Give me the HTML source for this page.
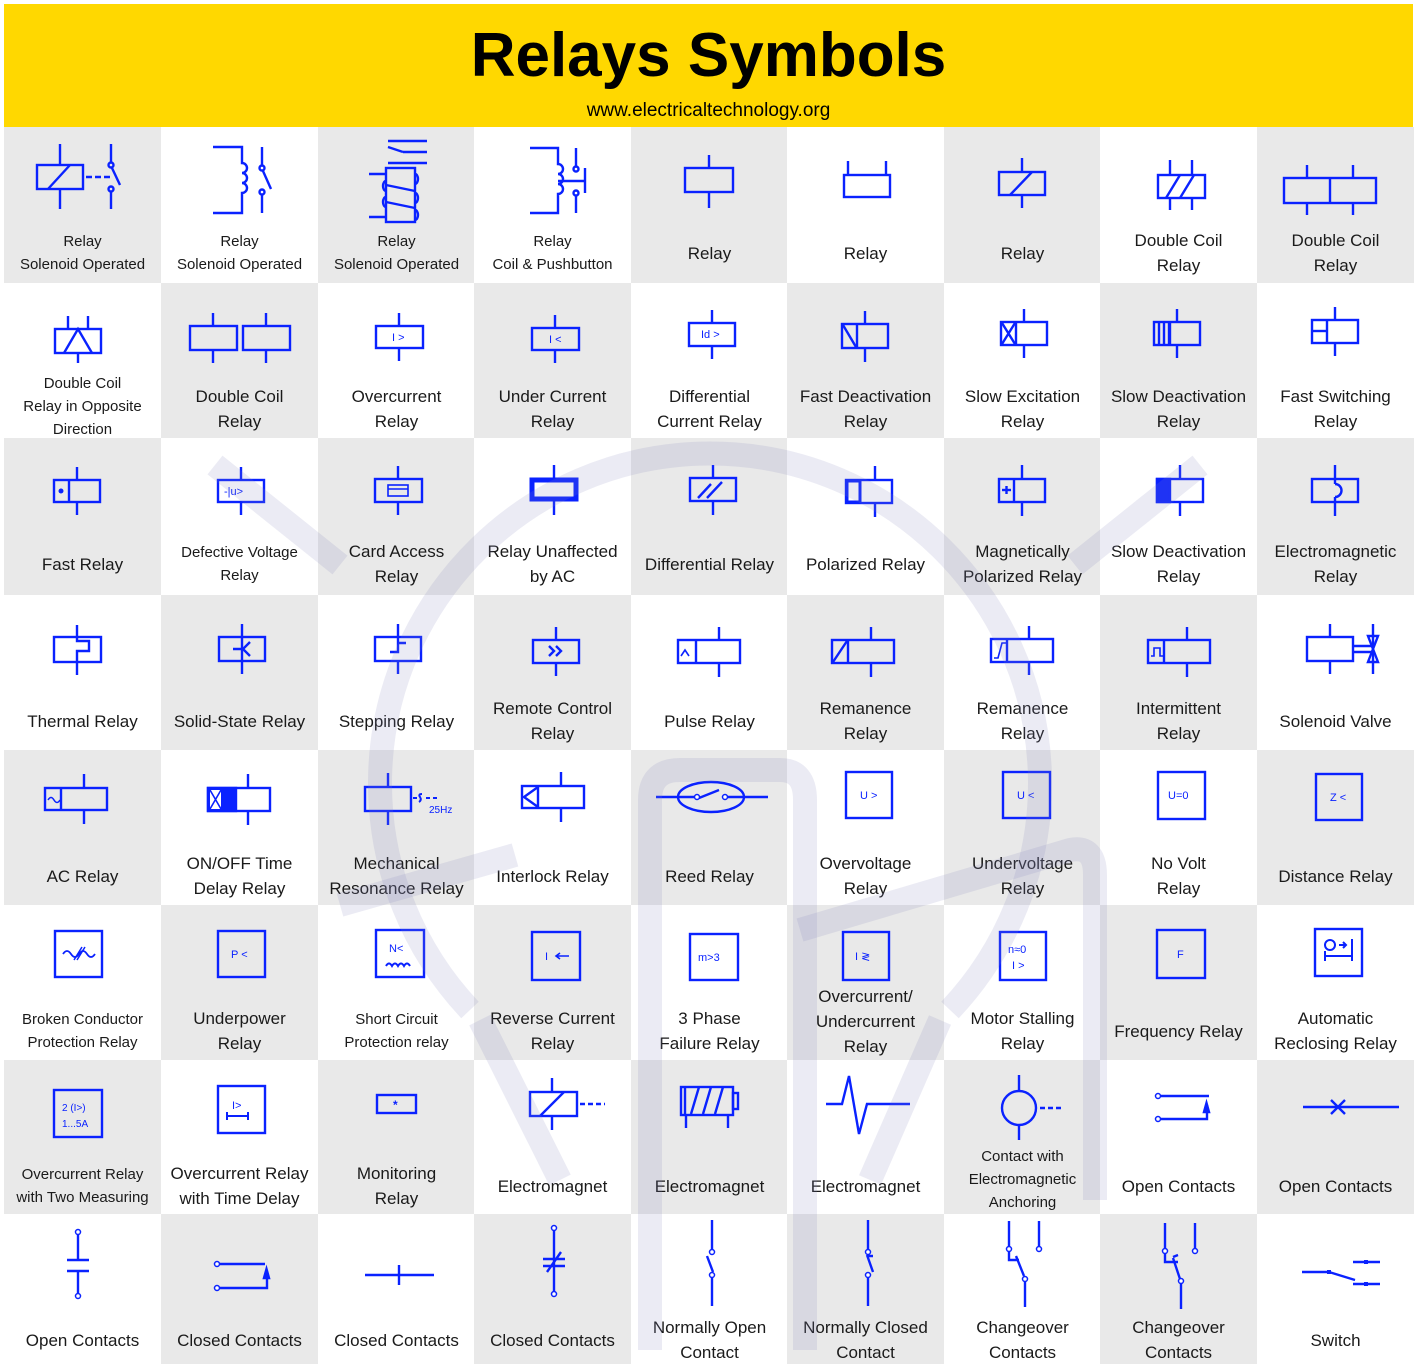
<!DOCTYPE html>
<html><head><meta charset="utf-8">
<style>
*{margin:0;padding:0;box-sizing:border-box}
body{width:1417px;height:1368px;background:#fff;position:relative;overflow:hidden;font-family:"Liberation Sans",sans-serif;color:#1a1a1a}
.hdr{position:absolute;left:4px;top:4px;width:1409px;height:123px;background:#FFD800;text-align:center}
.hdr h1{font-size:62px;font-weight:bold;color:#000;line-height:1;margin-top:21px}
.hdr p{font-size:19px;color:#000;margin-top:13px}
.c{position:absolute;width:157px;overflow:hidden}
.g{background:#e9e9e9}
.w{background:#fff}
.c svg{position:absolute;left:0;top:0;width:157px;height:155px}
.c svg g{stroke:#0a22ff;stroke-width:2.4;fill:none}
.c svg text{fill:#0a22ff;stroke:none;font-family:"Liberation Sans",sans-serif;font-size:11px}
.l{position:absolute;left:-4px;right:-4px;top:98px;height:56px;display:flex;flex-direction:column;justify-content:center;align-items:center;text-align:center;font-size:17px;line-height:25px;white-space:nowrap}
.s{font-size:15px;line-height:23px}
.t3{top:84px;height:78px}
.wm{position:absolute;left:0;top:0;width:1417px;height:1368px;pointer-events:none}
</style></head><body>
<div class="hdr"><h1>Relays Symbols</h1><p>www.electricaltechnology.org</p></div>

<div class="c g" style="left:4px;top:127px;height:156px"><svg viewBox="0 0 157 155"><g>
<rect x="33" y="38" width="46" height="24"/><line x1="44" y1="62" x2="66" y2="38"/><line x1="56" y1="17" x2="56" y2="38"/><line x1="56" y1="62" x2="56" y2="82"/>
<line x1="82" y1="50" x2="106" y2="50" stroke-dasharray="6,3"/><line x1="107" y1="17" x2="107" y2="36"/><circle cx="107" cy="38" r="2.5"/><line x1="108" y1="41" x2="116" y2="58"/><circle cx="107" cy="62" r="2.5"/><line x1="107" y1="65" x2="107" y2="82"/></g></svg>
<div class="l s"><span>Relay</span><span>Solenoid Operated</span></div></div>

<div class="c w" style="left:161px;top:127px;height:156px"><svg viewBox="0 0 157 155"><g>
<path d="M52 20H81V36a5 5 0 0 1 0 10a5 5 0 0 1 0 10a5 5 0 0 1 0 10V86H52"/><line x1="101" y1="20" x2="101" y2="39"/><circle cx="101" cy="41" r="2.5"/><line x1="102" y1="44" x2="110" y2="62"/><circle cx="101" cy="65" r="2.5"/><line x1="101" y1="68" x2="101" y2="86"/></g></svg>
<div class="l s"><span>Relay</span><span>Solenoid Operated</span></div></div>

<div class="c g" style="left:318px;top:127px;height:156px"><svg viewBox="0 0 157 155"><g>
<rect x="68" y="41" width="29" height="54"/><line x1="51" y1="47" x2="68" y2="47"/><line x1="51" y1="90" x2="68" y2="90"/>
<path d="M68 58L97 64M68 75L97 81"/><line x1="70" y1="20" x2="85" y2="25"/><line x1="85" y1="25" x2="109" y2="25"/><line x1="70" y1="14" x2="109" y2="14"/><line x1="70" y1="36" x2="109" y2="36"/>
<path d="M68 54a3 5 0 0 0 0 10M68 70a3 5 0 0 0 0 10M97 47a3 5 0 0 1 0 10M97 66a3 5 0 0 1 0 10M97 83a3 5 0 0 1 0 10"/></g></svg>
<div class="l s"><span>Relay</span><span>Solenoid Operated</span></div></div>

<div class="c w" style="left:474px;top:127px;height:156px"><svg viewBox="0 0 157 155"><g>
<path d="M56 21H84V37a4 4 0 0 1 0 10a4 4 0 0 1 0 10a4 4 0 0 1 0 10V86H56"/><line x1="84" y1="54" x2="111" y2="54"/><line x1="111" y1="41" x2="111" y2="66"/>
<line x1="102" y1="21" x2="102" y2="39"/><circle cx="102" cy="42" r="2.5"/><circle cx="102" cy="66" r="2.5"/><line x1="102" y1="69" x2="102" y2="86"/></g></svg>
<div class="l s"><span>Relay</span><span>Coil &amp; Pushbutton</span></div></div>

<div class="c g" style="left:631px;top:127px;height:156px"><svg viewBox="0 0 157 155"><g>
<rect x="54" y="41" width="48" height="24"/><line x1="78" y1="28" x2="78" y2="41"/><line x1="78" y1="65" x2="78" y2="81"/></g></svg>
<div class="l"><span>Relay</span></div></div>

<div class="c w" style="left:787px;top:127px;height:156px"><svg viewBox="0 0 157 155"><g>
<rect x="57" y="48" width="46" height="22"/><line x1="61" y1="34" x2="61" y2="48"/><line x1="99" y1="34" x2="99" y2="48"/></g></svg>
<div class="l"><span>Relay</span></div></div>

<div class="c g" style="left:944px;top:127px;height:156px"><svg viewBox="0 0 157 155"><g>
<rect x="55" y="45" width="46" height="23"/><line x1="66" y1="68" x2="88" y2="45"/><line x1="78" y1="31" x2="78" y2="45"/><line x1="78" y1="68" x2="78" y2="81"/></g></svg>
<div class="l"><span>Relay</span></div></div>

<div class="c w" style="left:1100px;top:127px;height:156px"><svg viewBox="0 0 157 155"><g>
<rect x="58" y="48" width="47" height="23"/><line x1="66" y1="71" x2="80" y2="48"/><line x1="80" y1="71" x2="94" y2="48"/><line x1="70" y1="33" x2="70" y2="48"/><line x1="92" y1="33" x2="92" y2="48"/><line x1="70" y1="71" x2="70" y2="83"/><line x1="92" y1="71" x2="92" y2="83"/></g></svg>
<div class="l"><span>Double Coil</span><span>Relay</span></div></div>

<div class="c g" style="left:1257px;top:127px;height:156px"><svg viewBox="0 0 157 155"><g>
<rect x="27" y="51" width="92" height="25"/><line x1="73" y1="51" x2="73" y2="76"/><line x1="50" y1="38" x2="50" y2="51"/><line x1="96" y1="38" x2="96" y2="51"/><line x1="50" y1="76" x2="50" y2="88"/><line x1="96" y1="76" x2="96" y2="88"/></g></svg>
<div class="l"><span>Double Coil</span><span>Relay</span></div></div>

<div class="c w" style="left:4px;top:283px;height:155px"><svg viewBox="0 0 157 155"><g>
<rect x="51" y="46" width="46" height="24"/><path d="M60 70L74 46L88 70"/><line x1="64" y1="33" x2="64" y2="46"/><line x1="84" y1="33" x2="84" y2="46"/><line x1="74" y1="70" x2="74" y2="80"/></g></svg>
<div class="l s t3"><span>Double Coil</span><span>Relay in Opposite</span><span>Direction</span></div></div>

<div class="c g" style="left:161px;top:283px;height:155px"><svg viewBox="0 0 157 155"><g>
<rect x="29" y="43" width="47" height="24"/><rect x="82" y="43" width="47" height="24"/><line x1="52" y1="30" x2="52" y2="43"/><line x1="105" y1="30" x2="105" y2="43"/><line x1="52" y1="67" x2="52" y2="80"/><line x1="105" y1="67" x2="105" y2="80"/></g></svg>
<div class="l"><span>Double Coil</span><span>Relay</span></div></div>

<div class="c w" style="left:318px;top:283px;height:155px"><svg viewBox="0 0 157 155"><g>
<rect x="58" y="43" width="47" height="22"/><line x1="81" y1="30" x2="81" y2="43"/><line x1="81" y1="65" x2="81" y2="78"/></g><text x="74" y="58">I &gt;</text></svg>
<div class="l"><span>Overcurrent</span><span>Relay</span></div></div>

<div class="c g" style="left:474px;top:283px;height:155px"><svg viewBox="0 0 157 155"><g>
<rect x="58" y="45" width="47" height="22"/><line x1="81" y1="32" x2="81" y2="45"/><line x1="81" y1="67" x2="81" y2="80"/></g><text x="75" y="60">I &lt;</text></svg>
<div class="l"><span>Under Current</span><span>Relay</span></div></div>

<div class="c w" style="left:631px;top:283px;height:155px"><svg viewBox="0 0 157 155"><g>
<rect x="58" y="40" width="46" height="23"/><line x1="81" y1="27" x2="81" y2="40"/><line x1="81" y1="63" x2="81" y2="76"/></g><text x="70" y="55">Id &gt;</text></svg>
<div class="l"><span>Differential</span><span>Current Relay</span></div></div>

<div class="c g" style="left:787px;top:283px;height:155px"><svg viewBox="0 0 157 155"><g>
<rect x="55" y="41" width="46" height="24"/><line x1="70" y1="41" x2="70" y2="65"/><line x1="56" y1="42" x2="69" y2="64"/><line x1="78" y1="28" x2="78" y2="41"/><line x1="78" y1="65" x2="78" y2="79"/></g></svg>
<div class="l"><span>Fast Deactivation</span><span>Relay</span></div></div>

<div class="c w" style="left:944px;top:283px;height:155px"><svg viewBox="0 0 157 155"><g>
<rect x="57" y="39" width="46" height="23"/><line x1="72" y1="39" x2="72" y2="62"/><path d="M58 40L71 61M71 40L58 61"/><line x1="80" y1="26" x2="80" y2="39"/><line x1="80" y1="62" x2="80" y2="75"/></g></svg>
<div class="l"><span>Slow Excitation</span><span>Relay</span></div></div>

<div class="c g" style="left:1100px;top:283px;height:155px"><svg viewBox="0 0 157 155"><g>
<rect x="54" y="39" width="46" height="23"/><line x1="59" y1="39" x2="59" y2="62"/><line x1="64" y1="39" x2="64" y2="62"/><line x1="69" y1="39" x2="69" y2="62"/><line x1="70" y1="39" x2="70" y2="62"/><line x1="77" y1="26" x2="77" y2="39"/><line x1="77" y1="62" x2="77" y2="75"/></g></svg>
<div class="l"><span>Slow Deactivation</span><span>Relay</span></div></div>

<div class="c w" style="left:1257px;top:283px;height:155px"><svg viewBox="0 0 157 155"><g>
<rect x="55" y="37" width="46" height="23"/><line x1="70" y1="37" x2="70" y2="60"/><line x1="55" y1="48" x2="70" y2="48"/><line x1="78" y1="24" x2="78" y2="37"/><line x1="78" y1="60" x2="78" y2="73"/></g></svg>
<div class="l"><span>Fast Switching</span><span>Relay</span></div></div>

<div class="c g" style="left:4px;top:438px;height:157px"><svg viewBox="0 0 157 155"><g>
<rect x="50" y="42" width="46" height="22"/><line x1="65" y1="42" x2="65" y2="64"/><line x1="73" y1="29" x2="73" y2="42"/><line x1="73" y1="64" x2="73" y2="77"/></g><circle cx="57" cy="53" r="2.5" fill="#0a22ff"/></svg>
<div class="l"><span>Fast Relay</span></div></div>

<div class="c w" style="left:161px;top:438px;height:157px"><svg viewBox="0 0 157 155"><g>
<rect x="57" y="42" width="46" height="22"/><line x1="80" y1="29" x2="80" y2="42"/><line x1="80" y1="64" x2="80" y2="77"/></g><text x="63" y="57">-|u&gt;</text></svg>
<div class="l s"><span>Defective Voltage</span><span>Relay</span></div></div>

<div class="c g" style="left:318px;top:438px;height:157px"><svg viewBox="0 0 157 155"><g>
<rect x="57" y="41" width="47" height="23"/><rect x="70" y="47" width="20" height="11" stroke-width="1.6"/><line x1="70" y1="51" x2="90" y2="51" stroke-width="1.6"/><line x1="80" y1="28" x2="80" y2="41"/><line x1="80" y1="64" x2="80" y2="77"/></g></svg>
<div class="l"><span>Card Access</span><span>Relay</span></div></div>

<div class="c w" style="left:474px;top:438px;height:157px"><svg viewBox="0 0 157 155"><g>
<rect x="58" y="42" width="44" height="19" stroke-width="5"/><line x1="80" y1="27" x2="80" y2="40"/><line x1="80" y1="63" x2="80" y2="77"/></g></svg>
<div class="l"><span>Relay Unaffected</span><span>by AC</span></div></div>

<div class="c g" style="left:631px;top:438px;height:157px"><svg viewBox="0 0 157 155"><g>
<rect x="59" y="40" width="46" height="23"/><line x1="67" y1="60" x2="80" y2="46"/><line x1="76" y1="60" x2="91" y2="44"/><line x1="82" y1="27" x2="82" y2="40"/><line x1="82" y1="63" x2="82" y2="77"/></g></svg>
<div class="l"><span>Differential Relay</span></div></div>

<div class="c w" style="left:787px;top:438px;height:157px"><svg viewBox="0 0 157 155"><g>
<rect x="59" y="42" width="46" height="23"/><rect x="60" y="43" width="13" height="21" stroke-width="3"/><line x1="88" y1="28" x2="88" y2="42"/><line x1="88" y1="65" x2="88" y2="79"/></g></svg>
<div class="l"><span>Polarized Relay</span></div></div>

<div class="c g" style="left:944px;top:438px;height:157px"><svg viewBox="0 0 157 155"><g>
<rect x="55" y="41" width="46" height="23"/><line x1="70" y1="41" x2="70" y2="64"/><line x1="58" y1="52" x2="67" y2="52"/><line x1="62.5" y1="48" x2="62.5" y2="56"/><line x1="78" y1="27" x2="78" y2="41"/><line x1="78" y1="64" x2="78" y2="78"/></g></svg>
<div class="l"><span>Magnetically</span><span>Polarized Relay</span></div></div>

<div class="c w" style="left:1100px;top:438px;height:157px"><svg viewBox="0 0 157 155"><g>
<rect x="57" y="41" width="46" height="23"/><rect x="57" y="41" width="13" height="23" fill="#0a22ff"/><line x1="80" y1="27" x2="80" y2="41"/><line x1="80" y1="64" x2="80" y2="78"/></g></svg>
<div class="l"><span>Slow Deactivation</span><span>Relay</span></div></div>

<div class="c g" style="left:1257px;top:438px;height:157px"><svg viewBox="0 0 157 155"><g>
<rect x="55" y="41" width="46" height="23"/><path d="M78 46a6 6 0 0 1 0 13"/><line x1="78" y1="27" x2="78" y2="46"/><line x1="78" y1="59" x2="78" y2="78"/></g></svg>
<div class="l"><span>Electromagnetic</span><span>Relay</span></div></div>

<div class="c w" style="left:4px;top:595px;height:155px"><svg viewBox="0 0 157 155"><g>
<rect x="50" y="42" width="47" height="25"/><path d="M73 30V46H85V56H73V67V80"/></g></svg>
<div class="l"><span>Thermal Relay</span></div></div>

<div class="c g" style="left:161px;top:595px;height:155px"><svg viewBox="0 0 157 155"><g>
<rect x="58" y="42" width="46" height="24"/><line x1="81" y1="29" x2="81" y2="79"/><path d="M72 54H81M89 47L82 54L89 61"/></g></svg>
<div class="l"><span>Solid-State Relay</span></div></div>

<div class="c w" style="left:318px;top:595px;height:155px"><svg viewBox="0 0 157 155"><g>
<rect x="57" y="42" width="46" height="24"/><path d="M80 29V48M72 57H80V48H88"/><line x1="80" y1="66" x2="80" y2="79"/></g></svg>
<div class="l"><span>Stepping Relay</span></div></div>

<div class="c g" style="left:474px;top:595px;height:155px"><svg viewBox="0 0 157 155"><g>
<rect x="59" y="45" width="46" height="23"/><path d="M75 51L80 56L75 61M82 51L87 56L82 61"/><line x1="82" y1="32" x2="82" y2="45"/><line x1="82" y1="68" x2="82" y2="81"/></g></svg>
<div class="l"><span>Remote Control</span><span>Relay</span></div></div>

<div class="c w" style="left:631px;top:595px;height:155px"><svg viewBox="0 0 157 155"><g>
<rect x="47" y="45" width="62" height="23"/><line x1="65" y1="45" x2="65" y2="68"/><path d="M50 61L54 55L58 61" stroke-width="1.6"/><line x1="88" y1="32" x2="88" y2="45"/><line x1="88" y1="68" x2="88" y2="82"/></g></svg>
<div class="l"><span>Pulse Relay</span></div></div>

<div class="c g" style="left:787px;top:595px;height:155px"><svg viewBox="0 0 157 155"><g>
<rect x="45" y="45" width="62" height="23"/><line x1="61" y1="45" x2="61" y2="68"/><line x1="46" y1="67" x2="60" y2="46"/><line x1="84" y1="32" x2="84" y2="45"/><line x1="84" y1="68" x2="84" y2="82"/></g></svg>
<div class="l"><span>Remanence</span><span>Relay</span></div></div>

<div class="c w" style="left:944px;top:595px;height:155px"><svg viewBox="0 0 157 155"><g>
<rect x="47" y="44" width="62" height="23"/><line x1="63" y1="44" x2="63" y2="67"/><path d="M50 63H54L58 48H62" stroke-width="1.6"/><line x1="85" y1="31" x2="85" y2="44"/><line x1="85" y1="67" x2="85" y2="80"/></g></svg>
<div class="l"><span>Remanence</span><span>Relay</span></div></div>

<div class="c g" style="left:1100px;top:595px;height:155px"><svg viewBox="0 0 157 155"><g>
<rect x="48" y="45" width="62" height="23"/><line x1="64" y1="45" x2="64" y2="68"/><path d="M51 61H54V53H60V61H63" stroke-width="1.6"/><line x1="87" y1="32" x2="87" y2="45"/><line x1="87" y1="68" x2="87" y2="82"/></g></svg>
<div class="l"><span>Intermittent</span><span>Relay</span></div></div>

<div class="c w" style="left:1257px;top:595px;height:155px"><svg viewBox="0 0 157 155"><g>
<rect x="50" y="42" width="46" height="24"/><line x1="73" y1="29" x2="73" y2="42"/><line x1="73" y1="66" x2="73" y2="79"/><line x1="96" y1="51" x2="116" y2="51"/><line x1="96" y1="57" x2="116" y2="57"/><line x1="116" y1="29" x2="116" y2="79"/><path d="M111 41H121L116 54L111 67H121L116 54Z"/></g></svg>
<div class="l"><span>Solenoid Valve</span></div></div>

<div class="c g" style="left:4px;top:750px;height:155px"><svg viewBox="0 0 157 155"><g>
<rect x="41" y="38" width="62" height="22"/><line x1="57" y1="38" x2="57" y2="60"/><path d="M44 50q3-5 6 0t6 0" stroke-width="1.5"/><line x1="80" y1="24" x2="80" y2="38"/><line x1="80" y1="60" x2="80" y2="74"/></g></svg>
<div class="l"><span>AC Relay</span></div></div>

<div class="c w" style="left:161px;top:750px;height:155px"><svg viewBox="0 0 157 155"><g>
<rect x="47" y="38" width="62" height="23"/><rect x="47" y="38" width="28" height="23" fill="#0a22ff"/><rect x="49" y="40" width="11" height="19" fill="#fff" stroke="none"/><path d="M49 40L60 59M60 40L49 59" stroke-width="1.6"/><line x1="87" y1="24" x2="87" y2="38"/><line x1="87" y1="61" x2="87" y2="75"/></g></svg>
<div class="l"><span>ON/OFF Time</span><span>Delay Relay</span></div></div>

<div class="c g" style="left:318px;top:750px;height:155px"><svg viewBox="0 0 157 155"><g>
<rect x="47" y="37" width="46" height="24"/><line x1="70" y1="23" x2="70" y2="37"/><line x1="70" y1="61" x2="70" y2="75"/><path d="M95 48H99M104 44q-4 0 -2 3t-1 5M108 48H112M115 48H119" stroke-width="2"/></g><text x="111" y="63" style="font-size:10px">25Hz</text></svg>
<div class="l"><span>Mechanical</span><span>Resonance Relay</span></div></div>

<div class="c w" style="left:474px;top:750px;height:155px"><svg viewBox="0 0 157 155"><g>
<rect x="48" y="36" width="62" height="22"/><line x1="64" y1="36" x2="64" y2="58"/><path d="M64 37L50 47L64 57"/><line x1="87" y1="22" x2="87" y2="36"/><line x1="87" y1="58" x2="87" y2="72"/></g></svg>
<div class="l"><span>Interlock Relay</span></div></div>

<div class="c g" style="left:631px;top:750px;height:155px"><svg viewBox="0 0 157 155"><g>
<ellipse cx="80" cy="47" rx="33" ry="15"/><line x1="25" y1="47" x2="64" y2="47"/><line x1="96" y1="47" x2="137" y2="47"/><line x1="68" y1="48" x2="88" y2="40"/></g><circle cx="66" cy="47" r="2.5" fill="#fff" stroke="#0a22ff" stroke-width="1.5"/><circle cx="94" cy="47" r="2.5" fill="#fff" stroke="#0a22ff" stroke-width="1.5"/></svg>
<div class="l"><span>Reed Relay</span></div></div>

<div class="c w" style="left:787px;top:750px;height:155px"><svg viewBox="0 0 157 155"><g><rect x="59" y="22" width="46" height="46"/></g><text x="73" y="49">U &gt;</text></svg>
<div class="l"><span>Overvoltage</span><span>Relay</span></div></div>

<div class="c g" style="left:944px;top:750px;height:155px"><svg viewBox="0 0 157 155"><g><rect x="59" y="22" width="47" height="46"/></g><text x="73" y="49">U &lt;</text></svg>
<div class="l"><span>Undervoltage</span><span>Relay</span></div></div>

<div class="c w" style="left:1100px;top:750px;height:155px"><svg viewBox="0 0 157 155"><g><rect x="58" y="22" width="47" height="47"/></g><text x="68" y="49">U=0</text></svg>
<div class="l"><span>No Volt</span><span>Relay</span></div></div>

<div class="c g" style="left:1257px;top:750px;height:155px"><svg viewBox="0 0 157 155"><g><rect x="59" y="24" width="46" height="46"/></g><text x="73" y="51">Z &lt;</text></svg>
<div class="l"><span>Distance Relay</span></div></div>

<div class="c w" style="left:4px;top:905px;height:155px"><svg viewBox="0 0 157 155"><g><rect x="51" y="26" width="47" height="46"/><path d="M59 49q4-6 8 0t8 0t8 0t8 0" stroke-width="1.8"/><line x1="70" y1="55" x2="78" y2="42" stroke-width="1.5"/><line x1="73" y1="55" x2="81" y2="42" stroke-width="1.5"/></g></svg>
<div class="l s"><span>Broken Conductor</span><span>Protection Relay</span></div></div>

<div class="c g" style="left:161px;top:905px;height:155px"><svg viewBox="0 0 157 155"><g><rect x="57" y="26" width="47" height="46"/></g><text x="70" y="53">P &lt;</text></svg>
<div class="l"><span>Underpower</span><span>Relay</span></div></div>

<div class="c w" style="left:318px;top:905px;height:155px"><svg viewBox="0 0 157 155"><g><rect x="58" y="25" width="48" height="47"/><path d="M68 61q3-5 6 0q3-5 6 0q3-5 6 0q3-5 6 0" stroke-width="2"/></g><text x="71" y="47">N&lt;</text></svg>
<div class="l s"><span>Short Circuit</span><span>Protection relay</span></div></div>

<div class="c g" style="left:474px;top:905px;height:155px"><svg viewBox="0 0 157 155"><g><rect x="58" y="27" width="48" height="48"/><path d="M82 51H95M86 48L82 51L86 54" stroke-width="1.6"/></g><text x="71" y="55">I</text></svg>
<div class="l"><span>Reverse Current</span><span>Relay</span></div></div>

<div class="c w" style="left:631px;top:905px;height:155px"><svg viewBox="0 0 157 155"><g><rect x="59" y="29" width="48" height="46"/></g><text x="67" y="56">m&gt;3</text></svg>
<div class="l"><span>3 Phase</span><span>Failure Relay</span></div></div>

<div class="c g" style="left:787px;top:905px;height:155px"><svg viewBox="0 0 157 155"><g><rect x="56" y="27" width="46" height="48"/></g><text x="68" y="55">I ≷</text></svg>
<div class="l" style="top:77px;height:78px"><span>Overcurrent/</span><span>Undercurrent</span><span>Relay</span></div></div>

<div class="c w" style="left:944px;top:905px;height:155px"><svg viewBox="0 0 157 155"><g><rect x="56" y="27" width="46" height="48"/></g><text x="64" y="48">n≈0</text><text x="68" y="64">I &gt;</text></svg>
<div class="l"><span>Motor Stalling</span><span>Relay</span></div></div>

<div class="c g" style="left:1100px;top:905px;height:155px"><svg viewBox="0 0 157 155"><g><rect x="57" y="25" width="48" height="48"/></g><text x="77" y="53">F</text></svg>
<div class="l"><span>Frequency Relay</span></div></div>

<div class="c w" style="left:1257px;top:905px;height:155px"><svg viewBox="0 0 157 155"><g><rect x="58" y="24" width="47" height="47"/><circle cx="73" cy="40" r="5" stroke-width="2"/><path d="M82 40H89M86 37L89 40L86 43M95 34V46M68 46V56M68 51H95M95 46V56" stroke-width="2"/></g></svg>
<div class="l"><span>Automatic</span><span>Reclosing Relay</span></div></div>

<div class="c g" style="left:4px;top:1060px;height:154px"><svg viewBox="0 0 157 155"><g><rect x="50" y="30" width="48" height="47"/></g><text x="58" y="51" style="font-size:10px">2 (I&gt;)</text><text x="58" y="67" style="font-size:10px">1...5A</text></svg>
<div class="l s"><span>Overcurrent Relay</span><span>with Two Measuring</span></div></div>

<div class="c w" style="left:161px;top:1060px;height:154px"><svg viewBox="0 0 157 155"><g><rect x="57" y="26" width="47" height="47"/><path d="M66 56H87M66 52V60M87 52V60" stroke-width="2"/></g><text x="71" y="49">I&gt;</text></svg>
<div class="l"><span>Overcurrent Relay</span><span>with Time Delay</span></div></div>

<div class="c g" style="left:318px;top:1060px;height:154px"><svg viewBox="0 0 157 155"><g><rect x="59" y="35" width="39" height="18"/></g><text x="75" y="49" style="font-size:12px;font-weight:bold">*</text></svg>
<div class="l"><span>Monitoring</span><span>Relay</span></div></div>

<div class="c w" style="left:474px;top:1060px;height:154px"><svg viewBox="0 0 157 155"><g><rect x="56" y="32" width="47" height="24"/><line x1="66" y1="56" x2="90" y2="32"/><line x1="78" y1="18" x2="78" y2="32"/><line x1="78" y1="56" x2="78" y2="70"/><line x1="106" y1="44" x2="131" y2="44" stroke-dasharray="5,3"/></g></svg>
<div class="l"><span>Electromagnet</span></div></div>

<div class="c g" style="left:631px;top:1060px;height:154px"><svg viewBox="0 0 157 155"><g><rect x="50" y="27" width="52" height="28"/><rect x="102" y="33" width="5" height="16"/><line x1="54" y1="27" x2="54" y2="55"/><path d="M60 54L68 27M72 54L80 27M84 54L92 27"/><line x1="55" y1="55" x2="55" y2="68"/><line x1="97" y1="55" x2="97" y2="68"/></g></svg>
<div class="l"><span>Electromagnet</span></div></div>

<div class="c w" style="left:787px;top:1060px;height:154px"><svg viewBox="0 0 157 155"><g><path d="M39 44H55L62 16L72 74L80 44H123"/></g></svg>
<div class="l"><span>Electromagnet</span></div></div>

<div class="c g" style="left:944px;top:1060px;height:154px"><svg viewBox="0 0 157 155"><g><circle cx="75" cy="48" r="17"/><line x1="75" y1="15" x2="75" y2="31"/><line x1="75" y1="65" x2="75" y2="80"/><line x1="96" y1="48" x2="120" y2="48" stroke-dasharray="5,3"/></g></svg>
<div class="l s" style="top:80px;height:78px"><span>Contact with</span><span>Electromagnetic</span><span>Anchoring</span></div></div>

<div class="c w" style="left:1100px;top:1060px;height:154px"><svg viewBox="0 0 157 155"><g><line x1="61" y1="36" x2="109" y2="36"/><path d="M61 59H107V45"/><path d="M104 52L106.5 43L109 52Z" fill="#0a22ff"/></g><circle cx="58" cy="36" r="2.5" fill="#fff" stroke="#0a22ff" stroke-width="1.5"/><circle cx="58" cy="59" r="2.5" fill="#fff" stroke="#0a22ff" stroke-width="1.5"/></svg>
<div class="l"><span>Open Contacts</span></div></div>

<div class="c g" style="left:1257px;top:1060px;height:154px"><svg viewBox="0 0 157 155"><g><line x1="46" y1="47" x2="142" y2="47"/><path d="M74 40L88 54M88 40L74 54"/></g></svg>
<div class="l"><span>Open Contacts</span></div></div>

<div class="c w" style="left:4px;top:1214px;height:150px"><svg viewBox="0 0 157 155"><g><line x1="74" y1="20" x2="74" y2="46"/><line x1="74" y1="57" x2="74" y2="82"/><line x1="63" y1="46" x2="85" y2="46"/><line x1="63" y1="57" x2="85" y2="57"/></g><circle cx="74" cy="18" r="2.5" fill="#fff" stroke="#0a22ff" stroke-width="1.5"/><circle cx="74" cy="82" r="2.5" fill="#fff" stroke="#0a22ff" stroke-width="1.5"/></svg>
<div class="l"><span>Open Contacts</span></div></div>

<div class="c g" style="left:161px;top:1214px;height:150px"><svg viewBox="0 0 157 155"><g><line x1="58" y1="50" x2="104" y2="50"/><path d="M58 74H106V60"/><path d="M103 64L105.5 55L108 64Z" fill="#0a22ff"/></g><circle cx="56" cy="50" r="2.5" fill="#fff" stroke="#0a22ff" stroke-width="1.5"/><circle cx="56" cy="74" r="2.5" fill="#fff" stroke="#0a22ff" stroke-width="1.5"/></svg>
<div class="l"><span>Closed Contacts</span></div></div>

<div class="c w" style="left:318px;top:1214px;height:150px"><svg viewBox="0 0 157 155"><g><line x1="47" y1="61" x2="116" y2="61"/><line x1="81" y1="51" x2="81" y2="71"/></g></svg>
<div class="l"><span>Closed Contacts</span></div></div>

<div class="c g" style="left:474px;top:1214px;height:150px"><svg viewBox="0 0 157 155"><g><line x1="80" y1="16" x2="80" y2="78"/><line x1="69" y1="45" x2="91" y2="45"/><line x1="69" y1="52" x2="91" y2="52"/><line x1="73" y1="58" x2="87" y2="38"/></g><circle cx="80" cy="14" r="2.5" fill="#fff" stroke="#0a22ff" stroke-width="1.5"/><circle cx="80" cy="80" r="2.5" fill="#fff" stroke="#0a22ff" stroke-width="1.5"/></svg>
<div class="l"><span>Closed Contacts</span></div></div>

<div class="c w" style="left:631px;top:1214px;height:150px"><svg viewBox="0 0 157 155"><g><line x1="81" y1="6" x2="81" y2="36"/><line x1="76" y1="42" x2="82" y2="58"/><line x1="81" y1="64" x2="81" y2="92"/></g><circle cx="81" cy="38" r="2.5" fill="#fff" stroke="#0a22ff" stroke-width="1.5"/><circle cx="81" cy="61" r="2.5" fill="#fff" stroke="#0a22ff" stroke-width="1.5"/></svg>
<div class="l"><span>Normally Open</span><span>Contact</span></div></div>

<div class="c g" style="left:787px;top:1214px;height:150px"><svg viewBox="0 0 157 155"><g><line x1="81" y1="6" x2="81" y2="36"/><path d="M80 41L86 58M81 42L86 42"/><line x1="81" y1="64" x2="81" y2="92"/></g><circle cx="81" cy="38" r="2.5" fill="#fff" stroke="#0a22ff" stroke-width="1.5"/><circle cx="81" cy="61" r="2.5" fill="#fff" stroke="#0a22ff" stroke-width="1.5"/></svg>
<div class="l"><span>Normally Closed</span><span>Contact</span></div></div>

<div class="c w" style="left:944px;top:1214px;height:150px"><svg viewBox="0 0 157 155"><g><line x1="65" y1="7" x2="65" y2="33"/><line x1="95" y1="7" x2="95" y2="33"/><path d="M65 37V46H75M72 42L80 62"/><line x1="81" y1="67" x2="81" y2="93"/></g><circle cx="65" cy="35" r="2.5" fill="#fff" stroke="#0a22ff" stroke-width="1.5"/><circle cx="95" cy="35" r="2.5" fill="#fff" stroke="#0a22ff" stroke-width="1.5"/><circle cx="81" cy="65" r="2.5" fill="#fff" stroke="#0a22ff" stroke-width="1.5"/></svg>
<div class="l"><span>Changeover</span><span>Contacts</span></div></div>

<div class="c g" style="left:1100px;top:1214px;height:150px"><svg viewBox="0 0 157 155"><g><line x1="65" y1="9" x2="65" y2="35"/><line x1="95" y1="9" x2="95" y2="35"/><path d="M65 39V48H78M73 44L80 65M73 43L78 41"/><line x1="81" y1="69" x2="81" y2="95"/></g><circle cx="65" cy="37" r="2.5" fill="#fff" stroke="#0a22ff" stroke-width="1.5"/><circle cx="95" cy="37" r="2.5" fill="#fff" stroke="#0a22ff" stroke-width="1.5"/><circle cx="81" cy="67" r="2.5" fill="#fff" stroke="#0a22ff" stroke-width="1.5"/></svg>
<div class="l"><span>Changeover</span><span>Contacts</span></div></div>

<div class="c w" style="left:1257px;top:1214px;height:150px"><svg viewBox="0 0 157 155"><g><line x1="45" y1="58" x2="72" y2="58"/><line x1="72" y1="58" x2="98" y2="66"/><line x1="96" y1="48" x2="123" y2="48"/><line x1="96" y1="70" x2="123" y2="70"/></g><rect x="70" y="56" width="4" height="4" fill="#0a22ff"/><rect x="107" y="46" width="4" height="4" fill="#0a22ff"/><rect x="107" y="68" width="4" height="4" fill="#0a22ff"/></svg>
<div class="l"><span>Switch</span></div></div>

<svg class="wm" viewBox="0 0 1417 1368"><g fill="none" stroke="#8a8ac0" stroke-opacity="0.17" stroke-width="24">
<path d="M470 1010A330 330 0 1 1 950 1010"/>
<path d="M215 465L340 565M1200 465L1075 565"/>
<path d="M650 1350V800Q650 770 680 770H780Q805 770 805 800V1350"/>
<path d="M800 930L1070 850Q1095 845 1095 875V1200"/>
<path d="M340 905L515 855"/>
<path d="M480 1020L560 1180M940 1020L870 1180"/>
</g></svg>
</body></html>
